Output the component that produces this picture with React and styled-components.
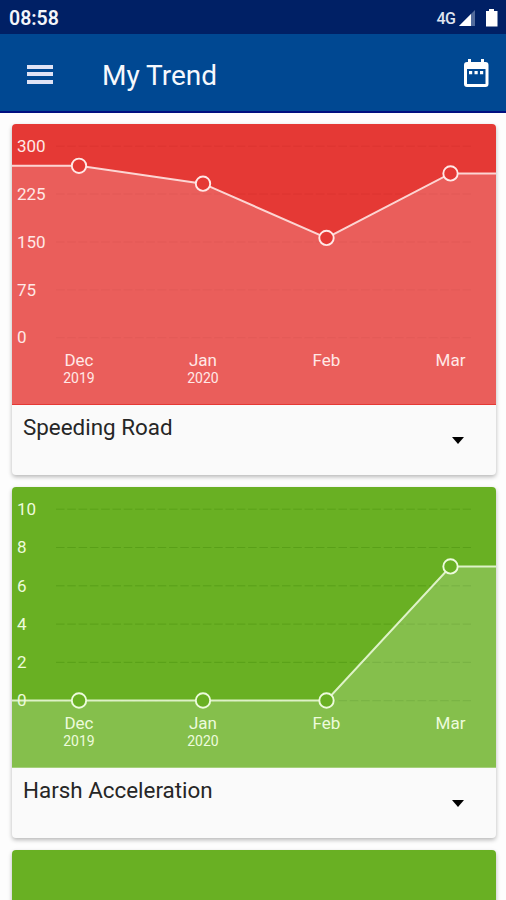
import styled, { createGlobalStyle } from "styled-components";

const GlobalStyle = createGlobalStyle`
  body {
    margin: 0;
    background: #fdfdfd;
    font-family: Roboto, "Liberation Sans", sans-serif;
  }
`;

const Screen = styled.div`
  width: 506px;
  height: 900px;
  overflow: hidden;
  display: flex;
  flex-direction: column;
`;

const StatusBar = styled.div`
  flex: none;
  box-sizing: border-box;
  height: 34px;
  padding: 2px 8px 0 9px;
  display: flex;
  align-items: center;
  justify-content: space-between;
  background: #002065;
  color: #f4f6fb;
`;

const Clock = styled.span`
  font-size: 19.5px;
  font-weight: 600;
`;

const StatusIcons = styled.div`
  display: flex;
  align-items: center;
`;

const Network = styled.span`
  margin-right: 4px;
  font-size: 16px;
  font-weight: 500;
  letter-spacing: -0.8px;
  color: #dfe4f0;
`;

const AppBar = styled.header`
  flex: none;
  box-sizing: border-box;
  height: 79px;
  padding: 0 16px 0 27px;
  display: flex;
  align-items: center;
  background: #004892;
  border-bottom: 2px solid #000f80;
  color: #f6f8fd;
`;

const MenuButton = styled.div`
  width: 26px;
  height: 19px;
  margin-top: 3px;
  display: flex;
  flex-direction: column;
  justify-content: space-between;
`;

const MenuLine = styled.span`
  height: 4px;
  background: #dfe3f5;
`;

const Title = styled.h1`
  flex: 1;
  margin: 5px 0 0 49px;
  font-size: 28px;
  font-weight: 400;
`;

const CardList = styled.main`
  display: flex;
  flex-direction: column;
  gap: 12px;
  padding: 11px 10.5px 0 12px;
`;

const Card = styled.section`
  flex: none;
  height: 351px;
  border-radius: 4px;
  overflow: hidden;
  background: #fafafa;
  box-shadow: 0 2px 4px rgba(0, 0, 0, 0.28);
`;

const Chart = styled.svg`
  display: block;
  width: 484px;
  height: 281px;
  background: ${(props) => props.$color};
`;

const AxisText = styled.text`
  font-size: ${(props) => (props.$small ? "14px" : "17px")};
  fill: ${(props) => props.$tint};
`;

const CardFooter = styled.div`
  box-sizing: border-box;
  height: 70px;
  padding: 9px 31.5px 0 11px;
  display: flex;
  justify-content: space-between;
`;

const CardTitle = styled.h2`
  margin: 0;
  font-size: 22.4px;
  line-height: 26px;
  font-weight: 400;
  color: #262626;
`;

const Caret = styled.span`
  width: 0;
  height: 0;
  margin-top: 23px;
  border: 6.5px solid transparent;
  border-top: 7px solid #000;
  border-bottom: 0;
`;

const WIDTH = 484;
const HEIGHT = 281;
const TOP = 22;
const BOTTOM = 213.5;
const COLUMNS = [67, 191, 314.5, 438.5];

const MONTHS = [
  { name: "Dec", year: "2019" },
  { name: "Jan", year: "2020" },
  { name: "Feb" },
  { name: "Mar" },
];

const RED = { base: "#e53935", grid: "#c62828", tint: "#ffe8e6", edge: "#e53935" };
const GREEN = { base: "#69b023", grid: "#4c9410", tint: "#edfbdc", edge: "#a5d07b" };

const cards = [
  {
    id: "speeding",
    title: "Speeding Road",
    colors: RED,
    ticks: [300, 225, 150, 75, 0],
    values: [269, 241, 156, 257],
    gridOpacity: 0.28,
  },
  {
    id: "acceleration",
    title: "Harsh Acceleration",
    colors: GREEN,
    ticks: [10, 8, 6, 4, 2, 0],
    values: [0, 0, 0, 7],
    gridOpacity: 0.55,
  },
  { id: "next", colors: GREEN, ticks: [], values: [] },
];

const TrendChart = ({ colors, ticks, values, gridOpacity }) => {
  const max = ticks[0];
  const y = (value) => BOTTOM - (value / max) * (BOTTOM - TOP);
  const points = values.map((value, i) => [COLUMNS[i], y(value)]);
  const line = values.length
    ? [[0, points[0][1]], ...points, [WIDTH, points[points.length - 1][1]]]
    : [];
  const path = line.map((p) => p.join(",")).join(" ");

  return (
    <Chart viewBox={`0 0 ${WIDTH} ${HEIGHT}`} $color={colors.base}>
      {ticks.map((tick) => (
        <line
          key={tick}
          x1="44"
          x2="459"
          y1={y(tick) + 0.2}
          y2={y(tick) + 0.2}
          stroke={colors.grid}
          strokeOpacity={gridOpacity}
          strokeDasharray="8.5 2.8"
        />
      ))}
      {values.length > 0 && (
        <>
          <polygon
            points={`${path} ${WIDTH},${HEIGHT} 0,${HEIGHT}`}
            fill="#fff"
            fillOpacity="0.19"
          />
          <rect y={HEIGHT - 1} width={WIDTH} height="1" fill={colors.edge} />
        </>
      )}
      {ticks.map((tick) => (
        <AxisText key={tick} x="5" y={y(tick) + 5.9} $tint={colors.tint}>
          {tick}
        </AxisText>
      ))}
      <polyline
        points={path}
        fill="none"
        stroke={colors.tint}
        strokeWidth="2"
        strokeOpacity="0.88"
      />
      {points.map(([cx, cy], i) => (
        <g key={cx} textAnchor="middle">
          <circle
            cx={cx}
            cy={cy}
            r="7.2"
            fill={colors.base}
            stroke={colors.tint}
            strokeWidth="1.9"
          />
          <AxisText x={cx} y="241.7" $tint={colors.tint}>
            {MONTHS[i].name}
          </AxisText>
          {MONTHS[i].year && (
            <AxisText x={cx} y="258.7" $small $tint={colors.tint}>
              {MONTHS[i].year}
            </AxisText>
          )}
        </g>
      ))}
    </Chart>
  );
};

const App = () => {
  return (
    <>
      <GlobalStyle />
      <Screen>
        <StatusBar>
          <Clock>08:58</Clock>
          <StatusIcons>
            <Network>4G</Network>
            <svg width="39" height="20" viewBox="0 0 39 20">
              <path d="M0 18 16 2v16z" fill="#526b9c" />
              <path d="M0 18 12 6v12z" fill="#fff" />
              <path d="M27 3h3V1h5v2h3.500v15.500H27z" fill="#fff" />
            </svg>
          </StatusIcons>
        </StatusBar>
        <AppBar>
          <MenuButton>
            <MenuLine />
            <MenuLine />
            <MenuLine />
          </MenuButton>
          <Title>My Trend</Title>
          <svg width="28" height="30" viewBox="0 0 28 30" fill="#fff">
            <path
              fillRule="evenodd"
              d="M6 1h3v3h10V1h3v3h1.500a3 3 0 0 1 3 3v19a3 3 0 0 1-3 3h-18.500a3 3 0 0 1-3-3V7a3 3 0 0 1 3-3h1zM5 11v15h18.500V11z"
            />
            <path d="M7 13h3.200v3.200H7zM12.500 13h3.200v3.200h-3.200zM18 13h3.200v3.200H18z" />
          </svg>
        </AppBar>
        <CardList>
          {cards.map((card) => (
            <Card key={card.id}>
              <TrendChart {...card} />
              {card.title && (
                <CardFooter>
                  <CardTitle>{card.title}</CardTitle>
                  <Caret />
                </CardFooter>
              )}
            </Card>
          ))}
        </CardList>
      </Screen>
    </>
  );
};

export default App;
